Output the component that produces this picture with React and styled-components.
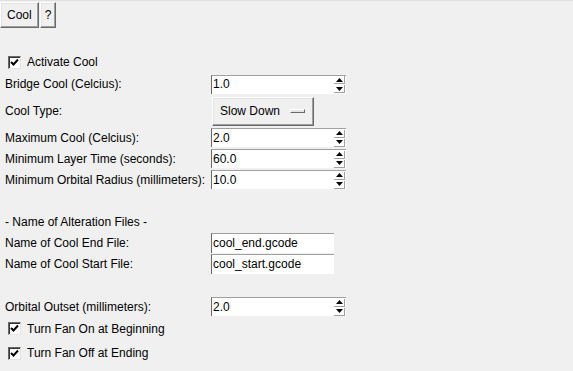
import React from 'react'
import styled, { createGlobalStyle } from 'styled-components'

const GlobalStyle = createGlobalStyle`
  html, body {
    margin: 0;
    padding: 0;
    background: #f0f0f0;
  }
  body {
    font-family: "Liberation Sans", Arial, sans-serif;
    font-size: 12px;
    color: #000;
  }
`

const Window = styled.div`
  width: 573px;
  height: 371px;
  background: #f0f0f0;
  display: flex;
  flex-direction: column;
  border-top: 1px solid #e2e2e2;
  box-sizing: border-box;
  overflow: hidden;
`

const Toolbar = styled.div`
  display: flex;
  height: 29px;
  padding-top: 1px;
  box-sizing: border-box;
  margin-bottom: 21px;
`

const ToolButton = styled.div`
  height: 26px;
  padding: 0 ${p => p.$pad || 6}px;
  display: flex;
  align-items: center;
  box-sizing: border-box;
  border: 1px solid;
  border-color: #ffffff #696969 #696969 #ffffff;
  box-shadow: inset -1px -1px 0 #a0a0a0, inset 1px 1px 0 #e3e3e3;
  background: #f0f0f0;
  margin-right: 1px;
`

const Row = styled.div`
  display: flex;
  align-items: center;
  height: ${p => p.$h}px;
  padding-left: 5px;
  flex-shrink: 0;
`

const Label = styled.div`
  width: 206px;
  white-space: nowrap;
`

const CheckRow = styled(Row)`
  padding-left: 8px;
`

const Box = styled.div`
  width: 13px;
  height: 13px;
  box-sizing: border-box;
  background: #fff;
  border: 1px solid;
  border-color: #696969 #e3e3e3 #e3e3e3 #696969;
  box-shadow: inset 1px 1px 0 #333;
  margin-right: 6px;
  display: flex;
  align-items: center;
  justify-content: center;
`

const Spin = styled.div`
  width: 135px;
  height: 19px;
  box-sizing: border-box;
  background: #fff;
  border-top: 1px solid #a0a0a0;
  border-left: 1px solid #696969;
  display: flex;
  align-items: center;
`

const Value = styled.div`
  flex: 1;
  padding-left: 1px;
  line-height: 17px;
`

const Arrows = styled.div`
  width: 11px;
  height: 17px;
  margin-right: 1px;
  display: flex;
  flex-direction: column;
  justify-content: space-between;
`

const ArrowBtn = styled.div`
  height: 8px;
  display: flex;
  align-items: center;
  justify-content: center;
  border-right: 1px solid #a0a0a0;
  border-bottom: 1px solid #a0a0a0;
  box-sizing: border-box;
`

const Entry = styled.div`
  width: 123px;
  height: 20px;
  box-sizing: border-box;
  background: #fff;
  border-top: 1px solid #a0a0a0;
  border-left: 1px solid #696969;
  padding-left: 1px;
  line-height: 18px;
`

const MenuButton = styled.div`
  width: 102px;
  height: 29px;
  margin-left: 1px;
  box-sizing: border-box;
  border: 1px solid;
  border-color: #ffffff #696969 #696969 #ffffff;
  box-shadow: inset -1px -1px 0 #a0a0a0, inset 1px 1px 0 #e3e3e3;
  display: flex;
  align-items: center;
  justify-content: space-between;
  padding: 0 8px 0 7px;
`

const Indicator = styled.div`
  width: 15px;
  height: 4px;
  box-sizing: border-box;
  border: 1px solid;
  border-color: #ffffff #696969 #696969 #ffffff;
  background: #e3e3e3;
`

const Tick = () => (
  <svg width="9" height="9" viewBox="0 0 9 9">
    <path d="M1 4 L3.5 6.5 L8 1.5" stroke="#000" strokeWidth="2" fill="none" />
  </svg>
)

const Check = ({ label, h }) => (
  <CheckRow $h={h}>
    <Box><Tick /></Box>
    {label}
  </CheckRow>
)

const Spinbox = ({ value }) => (
  <Spin>
    <Value>{value}</Value>
    <Arrows>
      <ArrowBtn>
        <svg width="7" height="4" viewBox="0 0 7 4"><path d="M3.5 0 L7 4 L0 4 Z" fill="#000" /></svg>
      </ArrowBtn>
      <ArrowBtn>
        <svg width="7" height="4" viewBox="0 0 7 4"><path d="M0 0 L7 0 L3.5 4 Z" fill="#000" /></svg>
      </ArrowBtn>
    </Arrows>
  </Spin>
)

const SpinRow = ({ label, value, h = 21 }) => (
  <Row $h={h}>
    <Label>{label}</Label>
    <Spinbox value={value} />
  </Row>
)

const EntryRow = ({ label, value, h = 21 }) => (
  <Row $h={h}>
    <Label>{label}</Label>
    <Entry>{value}</Entry>
  </Row>
)

export default function App() {
  return (
    <Window>
      <GlobalStyle />
      <Toolbar>
        <ToolButton>Cool</ToolButton>
        <ToolButton $pad={4}>?</ToolButton>
      </Toolbar>
      <Check label="Activate Cool" h={22} />
      <SpinRow label="Bridge Cool (Celcius):" value="1.0" h={22} />
      <Row $h={32}>
        <Label>Cool Type:</Label>
        <MenuButton>
          Slow Down
          <Indicator />
        </MenuButton>
      </Row>
      <SpinRow label="Maximum Cool (Celcius):" value="2.0" />
      <SpinRow label="Minimum Layer Time (seconds):" value="60.0" />
      <SpinRow label="Minimum Orbital Radius (millimeters):" value="10.0" />
      <Row $h={21} />
      <Row $h={21}>- Name of Alteration Files -</Row>
      <EntryRow label="Name of Cool End File:" value="cool_end.gcode" />
      <EntryRow label="Name of Cool Start File:" value="cool_start.gcode" h={22} />
      <Row $h={21} />
      <SpinRow label="Orbital Outset (millimeters):" value="2.0" />
      <Check label="Turn Fan On at Beginning" h={23} />
      <Check label="Turn Fan Off at Ending" h={26} />
    </Window>
  )
}
